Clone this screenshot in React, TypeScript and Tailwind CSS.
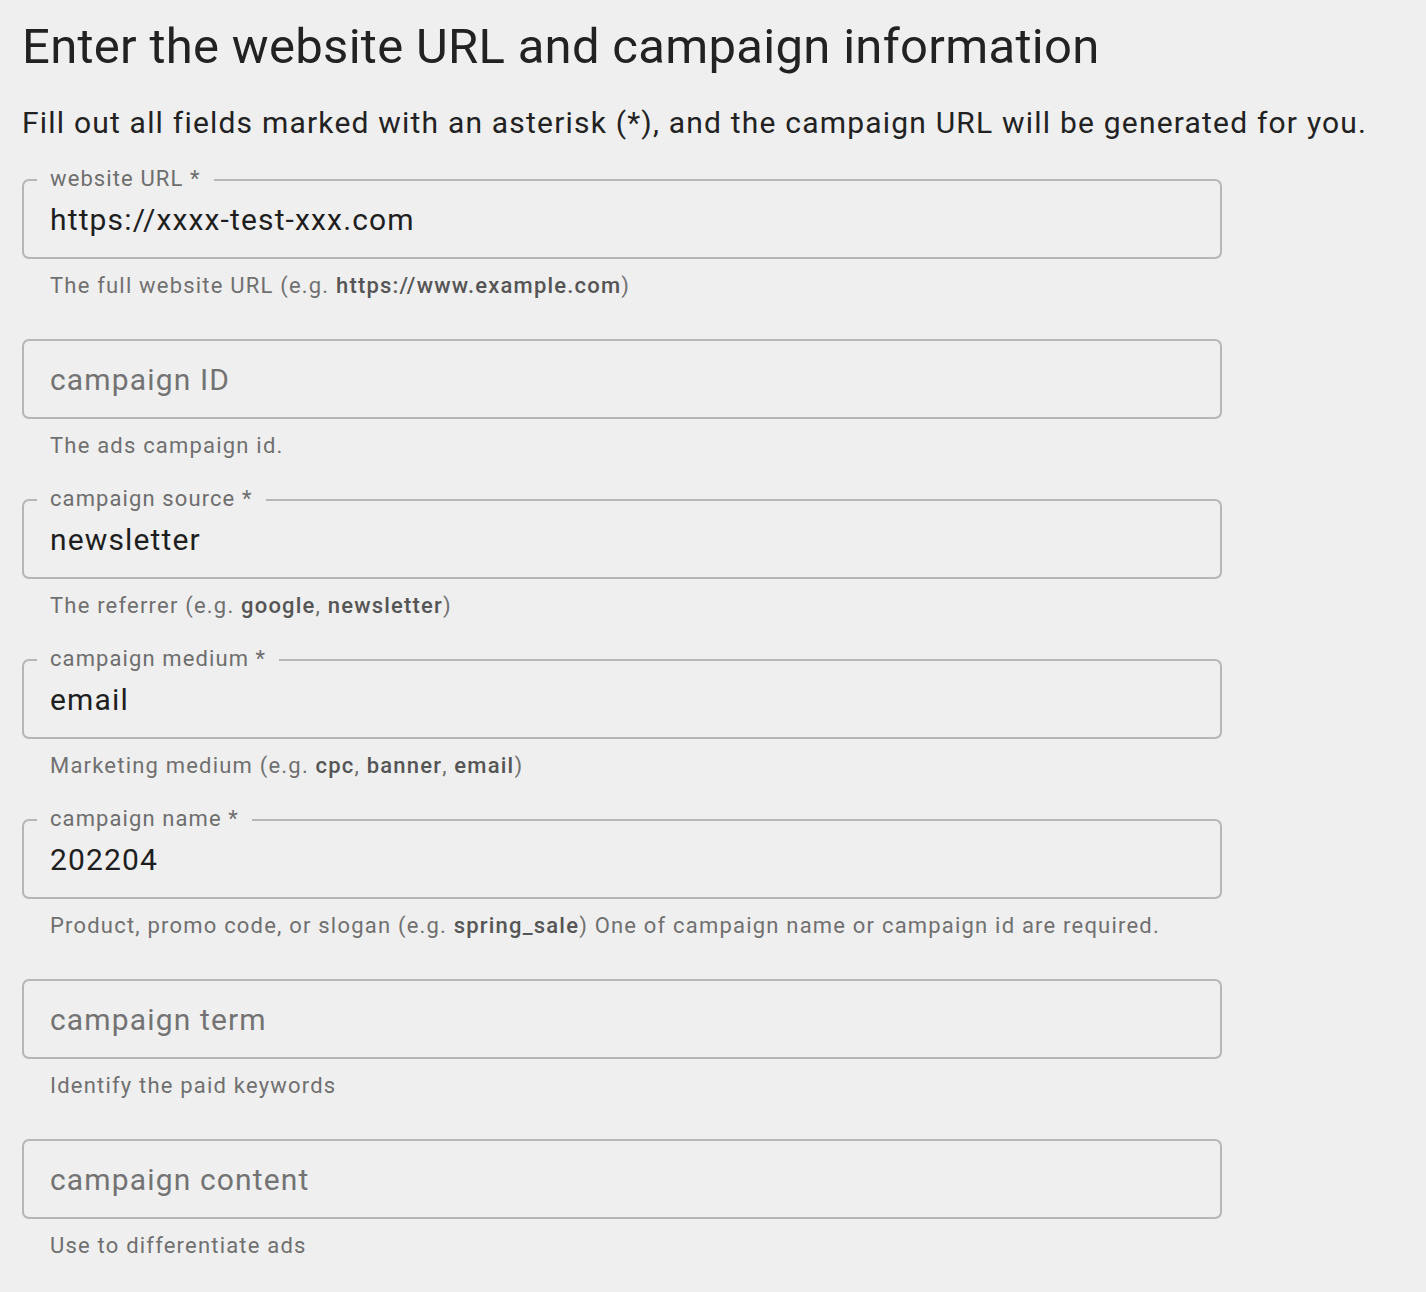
import React from 'react';

type Field = {
  label: string;
  required?: boolean;
  value?: string;
  helper: React.ReactNode;
};

const B: React.FC<{ children: React.ReactNode }> = ({ children }) => (
  <span className="font-medium text-[#555555]">{children}</span>
);

const fields: Field[] = [
  {
    label: 'website URL',
    required: true,
    value: 'https://xxxx-test-xxx.com',
    helper: (
      <>
        The full website URL (e.g. <B>https://www.example.com</B>)
      </>
    ),
  },
  { label: 'campaign ID', helper: 'The ads campaign id.' },
  {
    label: 'campaign source',
    required: true,
    value: 'newsletter',
    helper: (
      <>
        The referrer (e.g. <B>google</B>, <B>newsletter</B>)
      </>
    ),
  },
  {
    label: 'campaign medium',
    required: true,
    value: 'email',
    helper: (
      <>
        Marketing medium (e.g. <B>cpc</B>, <B>banner</B>, <B>email</B>)
      </>
    ),
  },
  {
    label: 'campaign name',
    required: true,
    value: '202204',
    helper: (
      <>
        Product, promo code, or slogan (e.g. <B>spring_sale</B>) One of campaign name or campaign id are required.
      </>
    ),
  },
  { label: 'campaign term', helper: 'Identify the paid keywords' },
  { label: 'campaign content', helper: 'Use to differentiate ads' },
];

const OutlinedField: React.FC<{ field: Field }> = ({ field }) => {
  const filled = !!field.value;
  return (
    <div className="h-[160px] w-[1200px]">
      <div className="relative h-[80px] border-2 border-[#b6b6b6] rounded-[7px] flex items-center px-[26px]">
        {filled && (
          <span className="absolute -top-[16px] left-[13px] px-[13px] bg-[#efefef] text-[22px] leading-[28px] text-[#6e6e6e] tracking-[1.1px]">
            {field.label}
            {field.required ? ' *' : ''}
          </span>
        )}
        {filled ? (
          <span className="text-[30px] text-[#1e1e1e] tracking-[1.15px]">{field.value}</span>
        ) : (
          <span className="text-[30px] text-[#737373] tracking-[1.15px]">{field.label}</span>
        )}
      </div>
      <p className="mt-[13px] pl-[28px] text-[22px] leading-[28px] text-[#707070] tracking-[1.2px] whitespace-nowrap">
        {field.helper}
      </p>
    </div>
  );
};

const App: React.FC = () => {
  return (
    <div
      className="min-h-[1292px] bg-[#efefef] flex flex-col"
      style={{ fontFamily: 'Roboto, "Noto Sans", sans-serif' }}
    >
      <div className="pl-[22px] pt-[19px] flex-1">
        <h1 className="text-[49px] leading-[56px] text-[#222222] font-normal tracking-[0.3px]">
          Enter the website URL and campaign information
        </h1>
        <p className="mt-[30px] text-[30px] leading-[36px] text-[#222222] tracking-[1.2px] whitespace-nowrap">
          Fill out all fields marked with an asterisk (*), and the campaign URL will be generated for you.
        </p>
        <div className="mt-[38px] flex flex-col">
          {fields.map(f => (
            <OutlinedField key={f.label} field={f} />
          ))}
        </div>
      </div>
      <div className="h-[14px] bg-gradient-to-b from-[#efefef] to-[#e7e7e7]" />
    </div>
  );
};

export default App;
